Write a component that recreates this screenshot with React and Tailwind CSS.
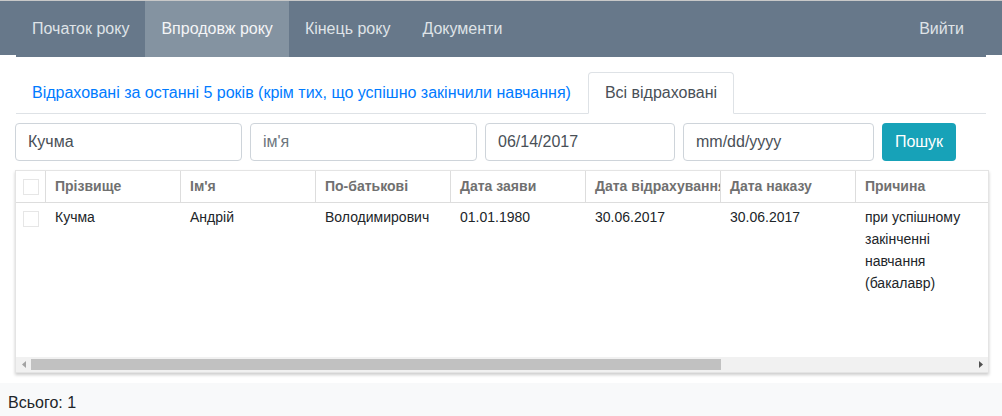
import React from "react";

const cols = [
  { name: "Прізвище", w: 135 },
  { name: "Ім'я", w: 135 },
  { name: "По-батькові", w: 135 },
  { name: "Дата заяви", w: 135 },
  { name: "Дата відрахування", w: 135 },
  { name: "Дата наказу", w: 135 },
  { name: "Причина", w: 135 },
];

const row = ["Кучма", "Андрій", "Володимирович", "01.01.1980", "30.06.2017", "30.06.2017", "при успішному закінченні навчання (бакалавр)"];

function Check() {
  return <div className="w-[16px] h-[16px] border border-[#e6e6e6] bg-white" />;
}

export default function App() {
  return (
    <div className="w-[1002px] h-[416px] bg-white overflow-hidden text-[#212529]" style={{ fontFamily: "'Liberation Sans', Arial, sans-serif" }}>
      {/* navbar */}
      <div className="relative h-[57px]">
        <div className="absolute inset-x-0 top-0 h-[55px] bg-[#67788a] border-t border-[#c8c8c8]" />
        <div className="relative mx-[16px] h-[57px] bg-[#67788a] border-t border-[#c8c8c8] flex items-stretch text-[16px] text-[#dfe3e7]">
          <div className="flex items-center px-[16px]">Початок року</div>
          <div className="flex items-center px-[16px] bg-[#8493a1] text-[#f4f5f7]">Впродовж року</div>
          <div className="flex items-center px-[16px]">Кінець року</div>
          <div className="flex items-center px-[16px]">Документи</div>
          <div className="flex-1" />
          <div className="flex items-center pr-[22px] pl-[16px]">Вийти</div>
        </div>
      </div>

      {/* tabs */}
      <div className="mx-[16px] mt-[15px] flex items-end border-b border-[#dee2e6] h-[42px] text-[16px]">
        <div className="h-full flex items-center px-[16px] text-[#007bff]">Відраховані за останні 5 років (крім тих, що успішно закінчили навчання)</div>
        <div className="h-[42px] -mb-px flex items-center px-[16px] ml-[1px] border border-[#dee2e6] border-b-white rounded-t-[4px] bg-white text-[#495057]">Всі відраховані</div>
      </div>

      {/* filters */}
      <div className="flex items-center mt-[9px] ml-[15px] h-[38px] text-[16px] text-[#495057]">
        <div className="w-[227px] h-[38px] border border-[#ced4da] rounded-[4px] flex items-center px-[12px]">Кучма</div>
        <div className="w-[227px] h-[38px] ml-[8px] border border-[#ced4da] rounded-[4px] flex items-center px-[12px] text-[#6c757d]">ім'я</div>
        <div className="w-[190px] h-[38px] ml-[8px] border border-[#ced4da] rounded-[4px] flex items-center px-[12px]">06/14/2017</div>
        <div className="w-[191px] h-[38px] ml-[8px] border border-[#ced4da] rounded-[4px] flex items-center px-[12px]">mm/dd/yyyy</div>
        <div className="w-[74px] h-[38px] ml-[8px] rounded-[4px] bg-[#17a2b8] text-white flex items-center justify-center">Пошук</div>
      </div>

      {/* table */}
      <div className="mt-[9px] ml-[15px] w-[974px] h-[203px] border border-[#e4e4e4] bg-white shadow-[0_2px_3px_rgba(0,0,0,0.2)] flex flex-col overflow-hidden text-[14px]">
        <div className="flex-1 overflow-hidden">
          <div className="flex h-[32px] border-b border-[#dddddd] font-bold text-[#707070]">
            <div className="w-[29px] shrink-0 flex items-center justify-center"><Check /></div>
            {cols.map((c, i) => (
              <div key={i} style={{ width: c.w }} className="shrink-0 border-l border-[#dddddd] flex items-center pl-[9px] pr-[4px] whitespace-nowrap overflow-hidden">{c.name}</div>
            ))}
          </div>
          <div className="flex pt-[3px] leading-[22px] text-[#212529]">
            <div className="w-[29px] shrink-0 flex justify-center pt-[5px]"><Check /></div>
            {row.map((t, i) => (
              <div key={i} style={{ width: cols[i].w }} className="shrink-0 pl-[10px] pr-[10px]">{t}</div>
            ))}
          </div>
        </div>
        <div className="h-[15px] bg-[#f1f1f1] flex items-center">
          <div className="w-[15px] h-full flex items-center justify-center">
            <svg width="4" height="7" viewBox="0 0 4 7"><path d="M4 0 L0 3.5 L4 7 Z" fill="#a3a3a3" /></svg>
          </div>
          <div className="w-[690px] h-[11px] bg-[#c1c1c1]" />
          <div className="flex-1" />
          <div className="w-[15px] h-full flex items-center justify-center">
            <svg width="4" height="7" viewBox="0 0 4 7"><path d="M0 0 L4 3.5 L0 7 Z" fill="#505050" /></svg>
          </div>
        </div>
      </div>

      {/* footer */}
      <div className="mt-[10px] h-[40px] bg-[#f8f9fa] pt-[8px] px-[8px] leading-[24px] text-[16px] text-[#212529]">Всього: 1</div>
    </div>
  );
}
